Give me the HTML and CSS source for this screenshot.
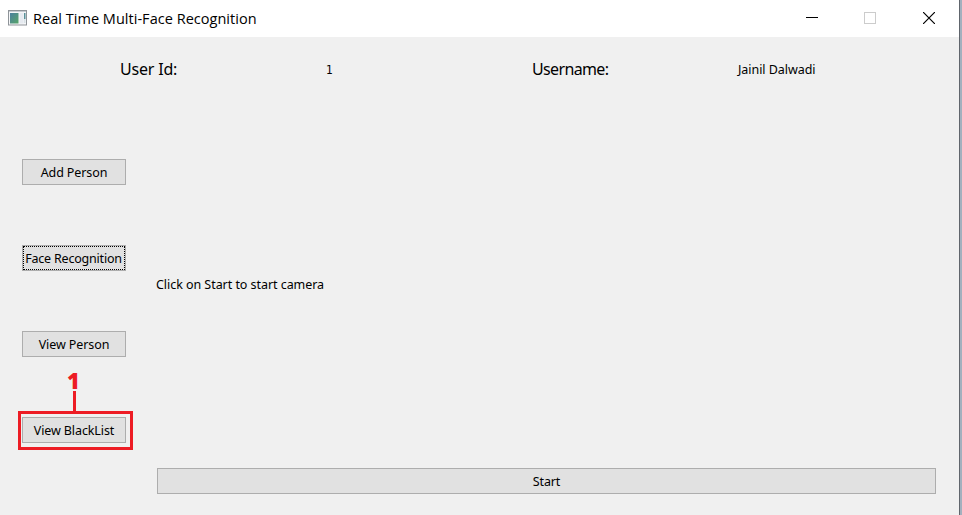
FILE: index.html
```html
<!DOCTYPE html>
<html lang="en">
<head>
<meta charset="utf-8">
<title>Real Time Multi-Face Recognition</title>
<link rel="stylesheet" href="styles.css">
</head>
<body>
<div class="window">
  <header class="titlebar">
    <svg class="app-icon" width="19" height="16" viewBox="0 0 19 16">
      <defs><linearGradient id="screen" x1="0" y1="0" x2="1" y2="1"><stop offset="0" stop-color="#4b7f9f"/><stop offset="1" stop-color="#57a567"/></linearGradient></defs>
      <rect x=".5" y=".5" width="18" height="14.5" fill="#f5f6f8" stroke="#8f9499"/>
      <rect x="1" y="1" width="17" height="1" fill="#c5cad0"/>
      <rect x="2" y="3" width="8.5" height="10.5" fill="url(#screen)"/>
      <rect x="11.5" y="3" width="4" height="10.5" fill="#e6eaf0"/>
      <rect x="16" y="3" width="1.5" height="6" fill="#5a9199"/>
      <rect x="16" y="9" width="1.5" height="4" fill="#d8e1e6"/>
    </svg>
    <h1 class="title">Real Time Multi-Face Recognition</h1>
    <div class="controls">
      <svg width="12" height="12" shape-rendering="crispEdges"><path d="M0 5.5H12" stroke="#000"/></svg>
      <svg width="12" height="12"><rect x=".5" y=".5" width="11" height="11" fill="none" stroke="#ccc"/></svg>
      <svg class="close" width="12" height="12"><path d="M0 0L12 12M12 0L0 12" stroke="#000" stroke-width="1.2"/></svg>
    </div>
  </header>
  <section class="user">
    <span class="label">User Id:</span>
    <span class="value digit">1</span>
    <span class="label label-name">Username:</span>
    <span class="value">Jainil Dalwadi</span>
  </section>
  <main class="content">
    <nav class="nav">
      <button class="btn">Add Person</button>
      <button class="btn focused">Face Recognition</button>
      <button class="btn">View Person</button>
      <div class="marked">
        <button class="btn">View BlackList</button>
        <div class="callout"><span class="callout-number">1</span><span class="callout-line"></span></div>
        <div class="callout-box"></div>
      </div>
    </nav>
    <section class="camera">
      <div class="preview"><span class="hint">Click on Start to start camera</span></div>
      <button class="btn">Start</button>
    </section>
  </main>
</div>
</body>
</html>
```
FILE: styles.css
```css
* { box-sizing: border-box; }

body {
  margin: 0;
  height: 515px;
  overflow: hidden;
  background: #a3b0be;
  font: 12.5px/16px "Noto Sans", sans-serif;
  letter-spacing: -0.05px;
  color: #000;
}

.window {
  width: 960px;
  height: 515px;
  display: flex;
  flex-direction: column;
  background: #f0f0f0;
  border-right: 1px solid #60656c;
}

.titlebar {
  height: 37px;
  flex: none;
  display: flex;
  align-items: center;
  padding: 0 24px 1px 8px;
  background: #fff;
}

.title {
  margin: 2px 0 0 6px;
  flex: 1;
  font: 400 14.5px/20px "Open Sans", sans-serif;
  letter-spacing: 0.03px;
}

.controls { display: flex; gap: 46px; }
.controls svg { display: block; }
.controls .close { margin-left: 1px; }

.user {
  height: 64px;
  flex: none;
  display: grid;
  grid-template-columns: repeat(4, 206px);
  align-items: center;
  padding-left: 120px;
}

.label { font-size: 16px; line-height: 20px; letter-spacing: -0.2px; }
.label-name { letter-spacing: -0.65px; }
.value { padding-top: 2px; }
.digit { font-family: "DejaVu Sans Condensed", "DejaVu Sans", sans-serif; font-size: 12px; }

.content { flex: 1; display: flex; }

.nav {
  width: 104px;
  margin: 58px 30px 0 22px;
  display: flex;
  flex-direction: column;
  gap: 60px;
}

.btn {
  display: flex;
  align-items: center;
  justify-content: center;
  width: 100%;
  height: 26px;
  padding: 2px 0 0;
  border: 1px solid #adadad;
  background: #e1e1e1;
  color: #000;
  font: inherit;
  letter-spacing: -0.1px;
  white-space: nowrap;
}

.focused { padding-right: 1px; outline: 1px dotted #000; outline-offset: -2px; letter-spacing: -0.2px; }

.marked { position: relative; }

.callout-box {
  position: absolute;
  inset: -6px -7px -7px -4px;
  border: 3px solid #ed1c24;
}

.callout {
  position: absolute;
  left: 41px;
  bottom: 32px;
  width: 23px;
  display: flex;
  flex-direction: column;
  align-items: center;
}

.callout-number {
  margin-right: 2px;
  color: #ed1c24;
  font: 800 22px/22px "Open Sans", sans-serif;
}

.callout-line { width: 3px; height: 20px; background: #ed1c24; }

.camera { width: 780px; padding-left: 1px; display: flex; flex-direction: column; }
.preview { height: 367px; margin-left: -1px; display: flex; align-items: center; }
```
